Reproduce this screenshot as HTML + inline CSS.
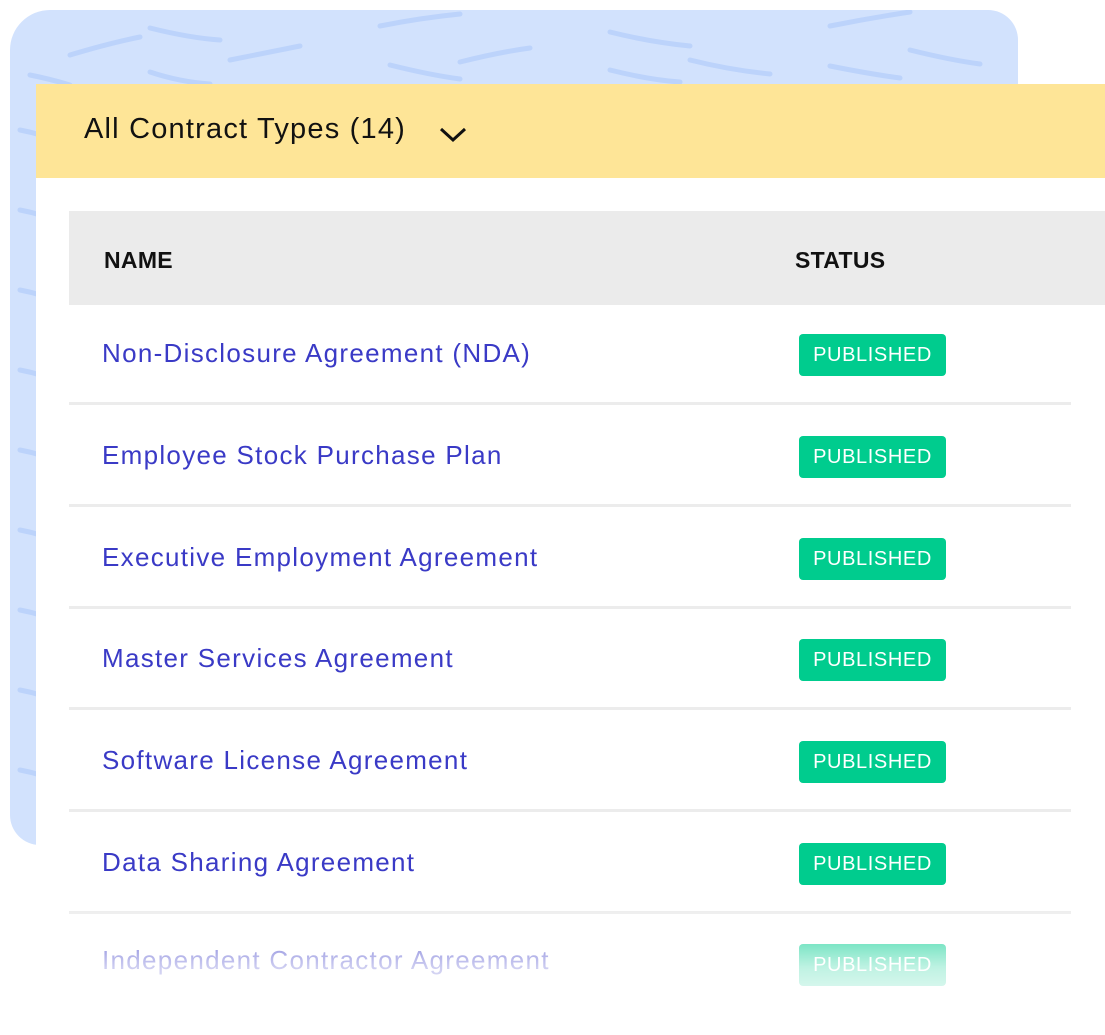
<!DOCTYPE html>
<html><head><style>
body{margin:0;width:1105px;height:1035px;background:#fff;position:relative;overflow:hidden;font-family:"Liberation Sans",sans-serif}
.blob{position:absolute;left:10px;top:10px;width:1008px;height:835px;background:#d2e2fd;border-radius:40px 30px 20px 30px}
.card{position:absolute;left:36px;top:84px;width:1069px;height:951px;background:#fff}
.hdr{position:absolute;left:36px;top:84px;width:1069px;height:94px;background:#fee597}
.hdr span{position:absolute;left:48px;top:29px;font-size:29px;color:#111;letter-spacing:1.2px}
.th{position:absolute;left:69px;top:211px;width:1036px;height:94px;background:#ebebeb}
.th b{position:absolute;top:36px;font-size:23px;color:#111;font-weight:bold;letter-spacing:0.3px}
.row{position:absolute;left:69px;width:1002px;height:97px;border-bottom:3px solid #ececec}
.row a{position:absolute;left:33px;top:33px;font-size:26px;color:#3a3ac6;text-decoration:none;letter-spacing:1.3px}
.row i{position:absolute;left:730px;top:29px;width:147px;height:42px;background:#00cc8e;border-radius:4px;color:#fff;font-style:normal;font-size:20px;text-align:center;line-height:42px;letter-spacing:0.6px}
.fade{position:absolute;left:0;top:900px;width:1105px;height:135px;background:linear-gradient(rgba(255,255,255,0),rgba(255,255,255,0.75) 50%,#fff 90%)}
</style></head><body>
<div class="blob"></div>
<svg style="position:absolute;left:10px;top:10px" width="1008" height="835"><g stroke="#bcd3fb" stroke-width="5" stroke-linecap="round" fill="none">
<path d="M140 18q40 10 70 12M370 16q40 -8 80 -12M600 22q40 10 80 14M820 16q40 -8 80 -14M60 45q40 -12 70 -18M220 50q40 -8 70 -14M450 52q40 -10 70 -14M680 50q40 10 80 14M900 40q40 10 70 14M140 62q30 10 60 12M380 55q40 10 70 14M600 60q40 10 70 12M820 56q40 8 70 12M20 65q20 4 40 10"/>
<path d="M10 120q20 4 20 6M10 200q20 4 20 6M10 280q20 4 20 6M10 360q20 4 20 6M10 440q20 4 20 6M10 520q20 4 20 6M10 600q20 4 20 6M10 680q20 4 20 6M10 760q20 4 20 6"/></g></svg>
<div class="card"></div>
<div class="hdr"><span>All Contract Types (14)</span>
<svg style="position:absolute;left:402px;top:41px" width="30" height="18"><path d="M3 4l12 11 12-11" stroke="#111" stroke-width="3" fill="none"/></svg></div>
<div class="th"><b style="left:35px">NAME</b><b style="left:726px">STATUS</b></div>
<div class="row" style="top:305px"><a>Non-Disclosure Agreement (NDA)</a><i>PUBLISHED</i></div>
<div class="row" style="top:407px"><a>Employee Stock Purchase Plan</a><i>PUBLISHED</i></div>
<div class="row" style="top:509px"><a>Executive Employment Agreement</a><i>PUBLISHED</i></div>
<div class="row" style="top:610px"><a>Master Services Agreement</a><i>PUBLISHED</i></div>
<div class="row" style="top:712px"><a>Software License Agreement</a><i>PUBLISHED</i></div>
<div class="row" style="top:814px"><a>Data Sharing Agreement</a><i>PUBLISHED</i></div>
<div class="row" style="top:913px;border:none"><a style="top:32px">Independent Contractor Agreement</a><i style="top:31px">PUBLISHED</i></div>
<div class="fade"></div>
</body></html>
